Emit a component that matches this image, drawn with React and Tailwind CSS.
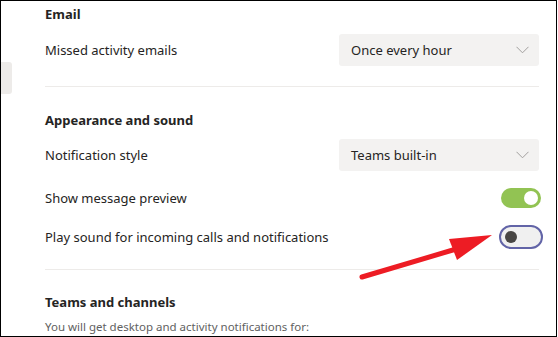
import React from "react";

function Dropdown({ value }) {
  return (
    <div className="w-[200px] h-8 bg-[#f3f2f1] rounded-[3px] flex items-center justify-between pl-3 pr-[10px]">
      <span className="text-[13px] leading-5 text-[#252423]">{value}</span>
      <svg width="13" height="8" viewBox="0 0 13 8" fill="none">
        <path d="M0.5 0.8 L6.5 6.8 L12.5 0.8" stroke="#a19f9d" strokeWidth="1" />
      </svg>
    </div>
  );
}

function Toggle({ on }) {
  if (on) {
    return (
      <div className="w-10 h-5 rounded-full bg-[#92c353] flex items-center justify-end pr-[3px] -mr-[2px]">
        <div className="w-[14px] h-[14px] rounded-full bg-white" />
      </div>
    );
  }
  return (
    <div className="w-11 h-6 rounded-full bg-[#f0f0f0] border-2 border-[#6264a7] flex items-center pl-[4px] -mr-[4px]">
      <div className="w-3 h-3 rounded-full bg-[#484644]" />
    </div>
  );
}

function Row({ label, children, className }) {
  return (
    <div className={"flex items-center justify-between " + (className || "")}>
      <span className="text-[13px] leading-5 text-[#252423]">{label}</span>
      {children}
    </div>
  );
}

export default function App() {
  return (
    <div
      className="relative w-[557px] h-[337px] border border-black bg-white overflow-hidden"
      style={{ fontFamily: '"Noto Sans", "Open Sans", sans-serif' }}
    >
      {/* grey tab sliver on the left */}
      <div className="absolute left-0 top-[61px] w-[11px] h-8 bg-[#edebe9] rounded-r-[3px]" />

      <div className="ml-[44px] w-[494px] pt-[3px]">
        <h3 className="text-[13px] font-bold text-[#252423] leading-5">Email</h3>
        <Row label="Missed activity emails" className="mt-[10px] h-8">
          <Dropdown value="Once every hour" />
        </Row>
        <div className="h-px bg-[#edebe9] mt-[20px]" />

        <h3 className="text-[13px] font-bold text-[#252423] leading-5 mt-[23px]">
          Appearance and sound
        </h3>
        <Row label="Notification style" className="mt-[9px] h-8">
          <Dropdown value="Teams built-in" />
        </Row>
        <Row label="Show message preview" className="mt-[15px] h-6">
          <Toggle on />
        </Row>
        <Row label="Play sound for incoming calls and notifications" className="mt-[15px] h-6">
          <Toggle on={false} />
        </Row>
        <div className="h-px bg-[#edebe9] mt-[20px]" />

        <h3 className="text-[13px] font-bold text-[#252423] leading-5 mt-[22px]">
          Teams and channels
        </h3>
        <p className="text-[11.5px] leading-4 text-[#616161] mt-[7px]">
          You will get desktop and activity notifications for:
        </p>
      </div>

      {/* red annotation arrow */}
      <svg className="absolute left-0 top-0" width="558" height="337">
        <line x1="361" y1="276" x2="462" y2="246" stroke="#ed1c24" strokeWidth="5" strokeLinecap="round" />
        <polygon points="448,238 491,234 456,259" fill="#ed1c24" />
      </svg>
    </div>
  );
}
